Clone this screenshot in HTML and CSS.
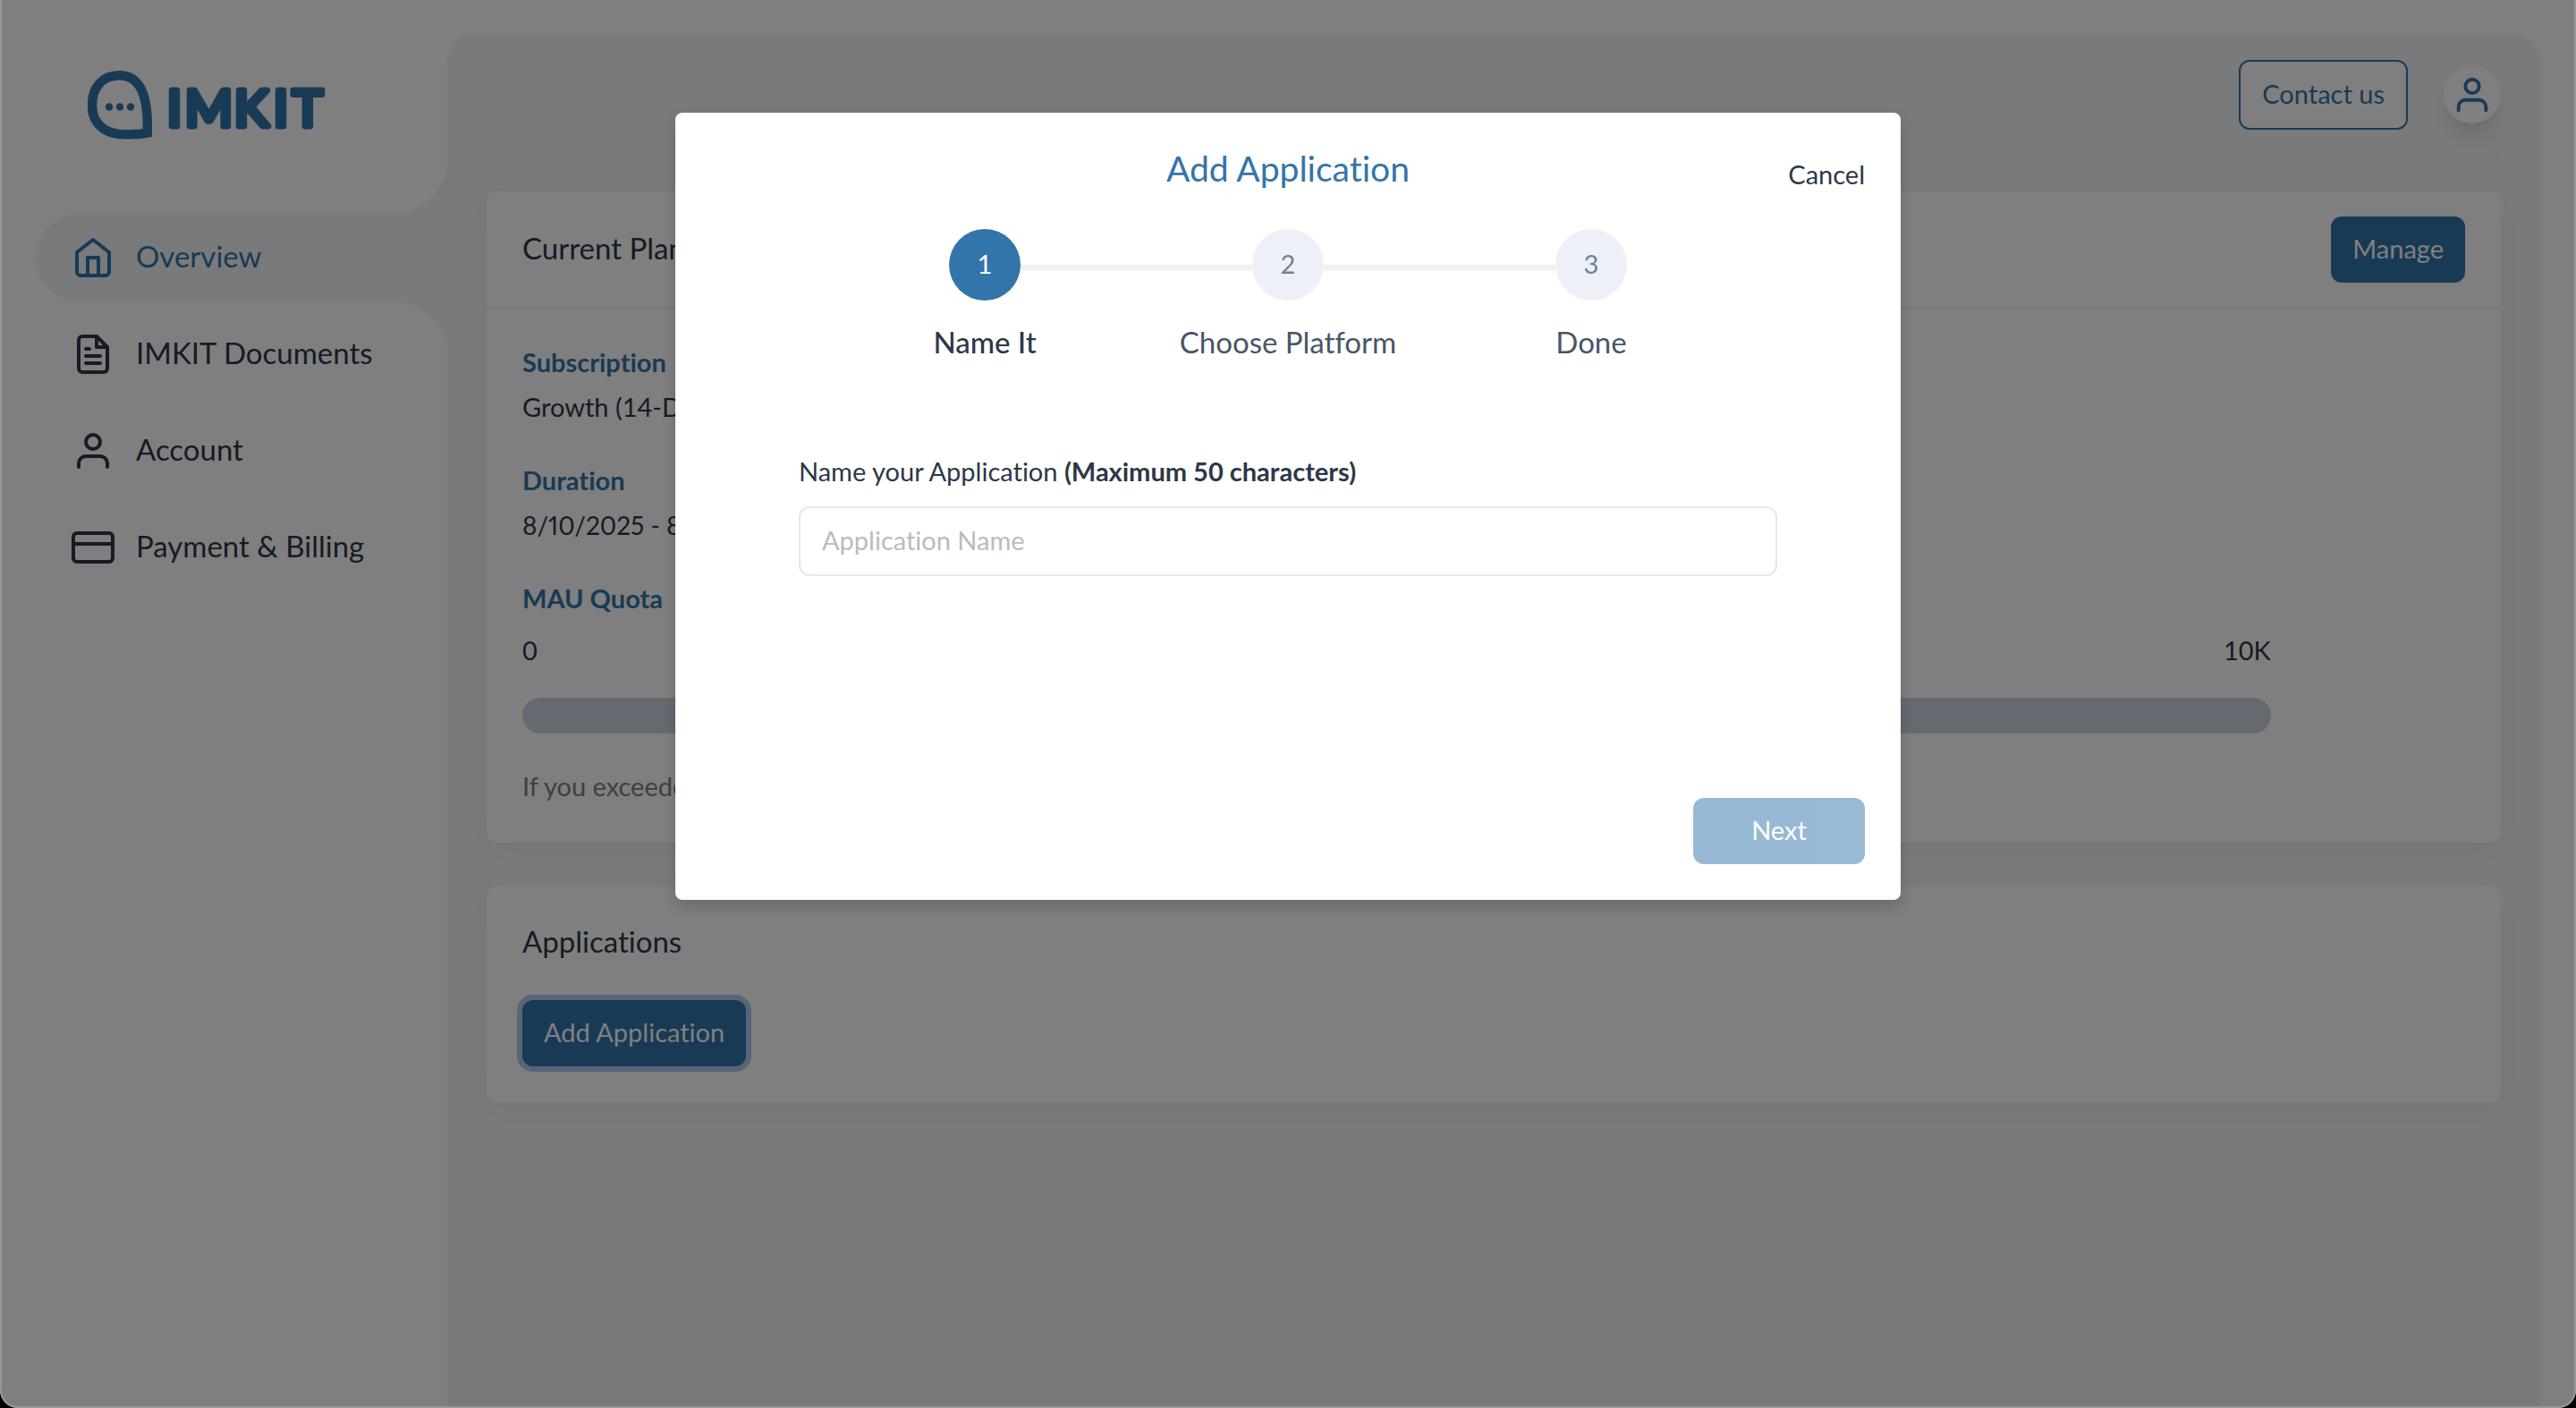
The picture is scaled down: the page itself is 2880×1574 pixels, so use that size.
FILE: index.html
```html
<!DOCTYPE html>
<html lang="en">
<head>
<meta charset="utf-8">
<meta name="viewport" content="width=device-width, initial-scale=1">
<title>IMKIT Dashboard</title>
<link rel="stylesheet" href="styles.css">
</head>
<body>
<div class="window">
  <aside class="sidebar">
    <a class="logo" href="#" aria-label="IMKIT home">
      <svg class="logo-mark" viewBox="0 0 72 77" aria-hidden="true">
        <path fill="none" stroke="currentColor" stroke-width="10.5" d="M66.700 69.600C56 71.400 44 71.600 36 71C16 69 5 56.500 5 39C5 18 17 5.300 35.500 5.300C57 5.300 68.300 25 66.700 69.600Z"/>
        <circle cx="24" cy="40.500" r="4.200" fill="currentColor"/>
        <circle cx="36" cy="40.500" r="4.200" fill="currentColor"/>
        <circle cx="48" cy="40.500" r="4.200" fill="currentColor"/>
      </svg>
      <svg class="logo-name" viewBox="0 0 190 77"><text x="-1 19 74 118 139" y="62">IMKIT</text></svg>
    </a>
    <nav class="nav">
      <a class="nav-item is-active" href="#">
        <svg class="icon" viewBox="0 0 48 48"><path d="M24 4L42 18V40a4 4 0 0 1-4 4H10a4 4 0 0 1-4-4V18ZM18 44V24H30V44"/></svg>
        <span class="nav-label">Overview</span>
      </a>
      <a class="nav-item" href="#">
        <svg class="icon" viewBox="0 0 48 48"><path d="M28 4H12a4 4 0 0 0-4 4V40a4 4 0 0 0 4 4H36a4 4 0 0 0 4-4V16ZM28 4V16H40M16 18H20M16 26H32M16 34H32"/></svg>
        <span class="nav-label">IMKIT Documents</span>
      </a>
      <a class="nav-item" href="#">
        <svg class="icon" viewBox="0 0 48 48"><circle cx="24" cy="14" r="8"/><path d="M8 42V38A8 8 0 0 1 16 30H32A8 8 0 0 1 40 38V42"/></svg>
        <span class="nav-label">Account</span>
      </a>
      <a class="nav-item" href="#">
        <svg class="icon" viewBox="0 0 48 48"><rect x="2" y="8" width="44" height="32" rx="4"/><path d="M2 20H46"/></svg>
        <span class="nav-label">Payment &amp; Billing</span>
      </a>
    </nav>
  </aside>

  <main class="main">
    <header class="topbar">
      <button class="btn btn-outline" type="button">Contact us</button>
      <button class="avatar" type="button" aria-label="Profile">
        <svg class="icon" viewBox="0 0 48 48"><circle cx="24" cy="14" r="8"/><path d="M8 42V38A8 8 0 0 1 16 30H32A8 8 0 0 1 40 38V42"/></svg>
      </button>
    </header>

    <section class="card">
      <div class="card-head">
        <h2 class="card-title">Current Plan</h2>
        <button class="btn btn-primary" type="button">Manage</button>
      </div>
      <div class="card-body">
        <dl class="facts">
          <div class="fact"><dt>Subscription</dt><dd>Growth (14-Day Trial)</dd></div>
          <div class="fact"><dt>Duration</dt><dd class="dates">8/10/2025 - 8/24/2025</dd></div>
        </dl>
        <h3 class="quota-title">MAU Quota</h3>
        <div class="quota">
          <div class="quota-scale"><span>0</span><span>10K</span></div>
          <div class="quota-bar" role="progressbar" aria-label="MAU Quota" aria-valuemin="0" aria-valuemax="10000" aria-valuenow="0"></div>
        </div>
        <p class="note">If you exceeded the quota, please upgrade your plan.</p>
      </div>
    </section>

    <section class="card">
      <div class="card-body">
        <h2 class="card-title">Applications</h2>
        <button class="btn btn-primary btn-add" type="button">Add Application</button>
      </div>
    </section>
  </main>

  <div class="overlay">
    <form class="modal" role="dialog" aria-modal="true" aria-labelledby="modal-title">
      <div class="modal-head">
        <h1 class="modal-title" id="modal-title">Add Application</h1>
        <button class="cancel" type="button">Cancel</button>
      </div>
      <ol class="steps">
        <li class="step is-current"><span class="step-dot">1</span>Name It</li>
        <li class="step"><span class="step-dot">2</span>Choose Platform</li>
        <li class="step"><span class="step-dot">3</span>Done</li>
      </ol>
      <div class="field">
        <label for="app-name">Name your Application <strong>(Maximum 50 characters)</strong></label>
        <input class="input" id="app-name" type="text" maxlength="50" placeholder="Application Name">
      </div>
      <div class="modal-foot">
        <button class="btn btn-primary btn-next" type="submit" disabled>Next</button>
      </div>
    </form>
  </div>
</div>
</body>
</html>
```

FILE: styles.css
```css
:root {
  --blue: #3375aa;
  --ink: #2d3748;
  --panel: #f2f5f8;
  --line: #edf0f6;
}

* { box-sizing: border-box; }

body {
  margin: 0;
  background: #000;
  color: var(--ink);
  font-family: Lato, "Liberation Sans", sans-serif;
  font-size: 29px;
  line-height: 38px;
  font-variant-ligatures: none;
}

h1, h2, h3, p, dl, dd, ol { margin: 0; padding: 0; }
h1, h2 { font-weight: 400; }
a { color: inherit; text-decoration: none; }
button, input { font: inherit; font-variant-ligatures: none; color: inherit; }

.window {
  position: relative;
  display: flex;
  min-height: 100vh;
  background: #fff;
  border-radius: 0 0 20px 20px;
  overflow: hidden;
}

/* thin frame along the sides and bottom of the window */
.window::after {
  content: "";
  position: absolute;
  inset: 0;
  border: 2px solid #999797;
  border-top: 0;
  border-radius: 0 0 20px 20px;
  pointer-events: none;
}

/* sidebar */
.sidebar {
  flex: none;
  width: 500px;
  padding: 79px 0 40px 40px;
}

.logo {
  display: flex;
  align-items: center;
  gap: 18px;
  height: 77px;
  margin: 0 0 82px 58px;
  color: var(--blue);
}
.logo-mark { width: 72px; height: 77px; }
.logo-name {
  width: 190px;
  height: 77px;
  font-size: 57px;
  fill: currentColor;
  stroke: currentColor;
  stroke-width: 7;
  stroke-linejoin: round;
  overflow: visible;
}

.nav { display: flex; flex-direction: column; gap: 8px; }
.nav-item {
  position: relative;
  display: flex;
  align-items: center;
  gap: 24px;
  height: 100px;
  padding-left: 40px;
  border-radius: 50px 0 0 50px;
  font-size: 33px;
}
.nav-label { padding-bottom: 4px; }
.nav-item.is-active { background: var(--panel); color: var(--blue); }
.nav-item.is-active::before,
.nav-item.is-active::after {
  content: "";
  position: absolute;
  right: 0;
  width: 60px;
  height: 60px;
}
.nav-item.is-active::before {
  bottom: 100%;
  background: radial-gradient(circle at 0 0, transparent 60px, var(--panel) 61px);
}
.nav-item.is-active::after {
  top: 100%;
  background: radial-gradient(circle at 0 100%, transparent 60px, var(--panel) 61px);
}

.icon {
  width: 48px;
  height: 48px;
  fill: none;
  stroke: currentColor;
  stroke-width: 4;
  stroke-linecap: round;
  stroke-linejoin: round;
}

/* main panel */
.main {
  flex: 1;
  min-width: 0;
  margin: 38px 40px 0 0;
  padding: 0 44px 40px;
  background: var(--panel);
  border-radius: 30px 30px 0 0;
}

.topbar {
  display: flex;
  align-items: center;
  justify-content: flex-end;
  gap: 40px;
  padding: 29px 0 27px;
  margin-bottom: 40px;
  border-bottom: 2px solid #e9ebf6;
}

.btn {
  height: 74px;
  padding: 0 24px 2px;
  border: 0;
  border-radius: 12px;
}
.btn-primary { background: var(--blue); color: #fff; }
.btn-outline {
  height: 78px;
  border: 2px solid var(--blue);
  background: #fff;
  color: var(--blue);
}

.avatar {
  display: grid;
  place-items: center;
  width: 64px;
  height: 64px;
  padding: 0;
  border: 0;
  border-radius: 50%;
  background: #fff;
  color: var(--blue);
  box-shadow: 0 20px 30px -6px rgba(0, 0, 0, .1), 0 8px 12px -4px rgba(0, 0, 0, .06);
}
.avatar .icon { width: 46px; height: 46px; }

.card {
  margin-bottom: 48px;
  background: #fff;
  border-radius: 12px;
  box-shadow: 0 8px 40px rgba(0, 0, 0, .04);
}
.card-head {
  display: flex;
  align-items: center;
  justify-content: space-between;
  padding: 28px 40px;
  border-bottom: 2px solid var(--line);
}
.card-title { padding-bottom: 4px; font-size: 33px; line-height: 44px; }
.card-body { padding: 40px; }

.fact { margin-bottom: 44px; }
.fact dt, .quota-title {
  font-size: 29px;
  font-weight: 700;
  color: var(--blue);
}
.fact dd { margin-top: 12px; }
.fact .dates { font-size: 28px; font-variant-numeric: proportional-nums; }
.quota { width: 90%; margin: 20px 0 40px; }
.quota-scale { display: flex; justify-content: space-between; }
.quota-bar {
  height: 40px;
  margin-top: 34px;
  border-radius: 20px;
  background: #cbd5e0;
}
.note { margin-bottom: 4px; color: #808080; }

.btn-add {
  margin-top: 40px;
  box-shadow: 0 0 0 6px #aecbee;
}

/* dialog */
.overlay {
  position: absolute;
  inset: 0;
  padding: 126px 40px 40px;
  background: rgba(0, 0, 0, .5);
}
.modal {
  max-width: 1370px;
  margin: 0 auto;
  padding: 40px;
  background: #fff;
  border-radius: 8px;
  box-shadow: 0 8px 16px rgba(0, 0, 0, .16);
}
.modal-head {
  display: grid;
  grid-template-columns: 1fr auto 1fr;
  align-items: start;
  height: 50px;
}
.modal-title {
  grid-column: 2;
  font-size: 39px;
  line-height: 44px;
  color: var(--blue);
}
.cancel {
  justify-self: end;
  padding: 10px 0 0;
  border: 0;
  background: none;
}

.steps {
  display: grid;
  grid-template-columns: repeat(3, 339px);
  justify-content: center;
  margin-top: 40px;
  list-style: none;
}
.step {
  position: relative;
  display: flex;
  flex-direction: column;
  align-items: center;
  gap: 24px;
  font-size: 33px;
  line-height: 44px;
  color: #4a5568;
}
.step.is-current { color: var(--ink); font-weight: 500; }
.step-dot {
  display: grid;
  place-items: center;
  width: 80px;
  height: 80px;
  padding-bottom: 2px;
  border-radius: 50%;
  background: var(--line);
  color: #718096;
  font-size: 29px;
  font-weight: 400;
}
.is-current .step-dot { background: var(--blue); color: #fff; }
/* connector from the previous step's dot */
.step + .step::before {
  content: "";
  position: absolute;
  top: 40px;
  right: calc(50% + 40px);
  width: calc(100% - 80px);
  height: 6px;
  background: var(--line);
}

.field {
  display: flex;
  flex-direction: column;
  gap: 20px;
  margin-top: 104px;
  padding: 0 98px;
}
.field strong { font-weight: 700; }
.input {
  width: 100%;
  height: 78px;
  padding: 0 24px 4px;
  border: 2px solid #e2e8f0;
  border-radius: 12px;
  background: #fff;
}
.input::placeholder { color: #bbb; opacity: 1; }

.modal-foot {
  display: flex;
  justify-content: flex-end;
  margin-top: 248px;
}
.btn-next { min-width: 192px; }
.btn-next:disabled { opacity: .5; }
```
